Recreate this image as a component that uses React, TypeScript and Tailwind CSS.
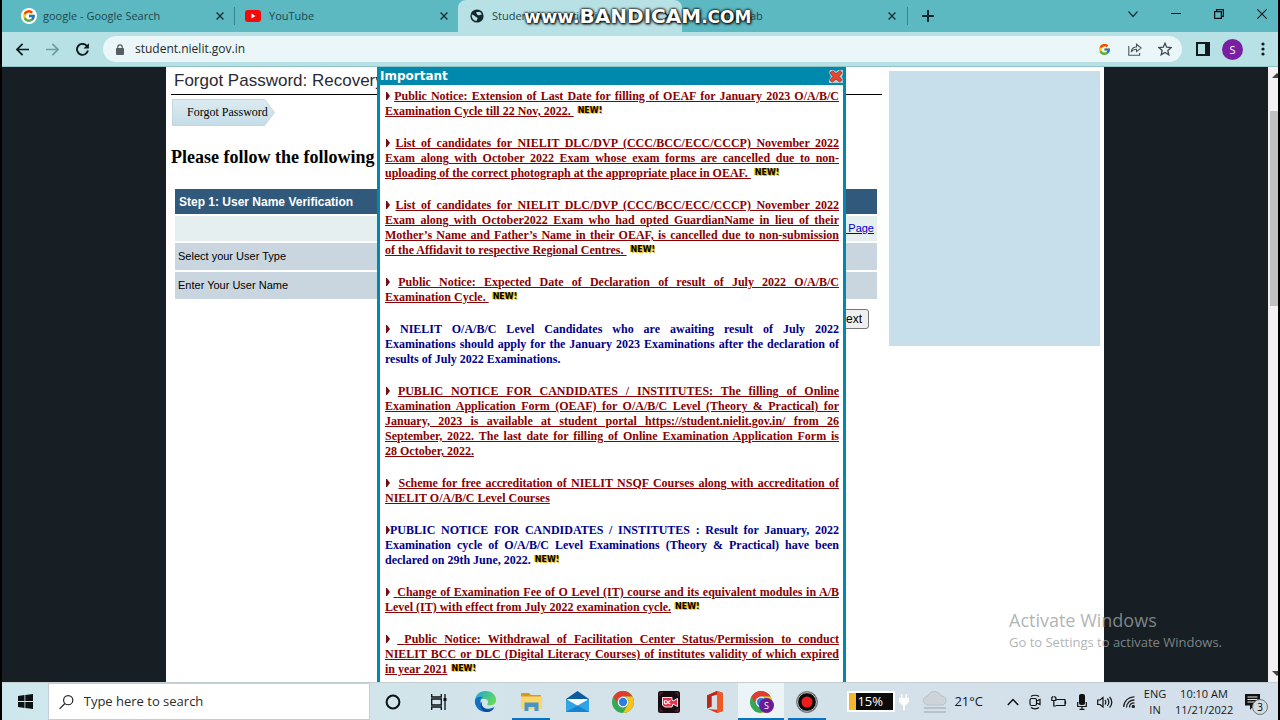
import React from 'react';
import { FcGoogle } from 'react-icons/fc';

interface Notice {
  lead: 'none' | 'space' | 'double' | 'link';
  lines: string[];
  plain?: boolean;
  isNew?: boolean;
}

const NOTICES: Notice[] = [
  {
    lead: 'space',
    isNew: true,
    lines: ['Public Notice: Extension of Last Date for filling of OEAF for January 2023 O/A/B/C', 'Examination Cycle till 22 Nov, 2022.\u00a0'],
  },
  {
    lead: 'space',
    isNew: true,
    lines: [
      'List of candidates for NIELIT DLC/DVP (CCC/BCC/ECC/CCCP) November 2022',
      'Exam along with October 2022 Exam whose exam forms are cancelled due to non-',
      'uploading of the correct photograph at the appropriate place in OEAF.\u00a0',
    ],
  },
  {
    lead: 'space',
    isNew: true,
    lines: [
      'List of candidates for NIELIT DLC/DVP (CCC/BCC/ECC/CCCP) November 2022',
      'Exam along with October2022 Exam who had opted GuardianName in lieu of their',
      'Mother’s Name and Father’s Name in their OEAF, is cancelled due to non-submission',
      'of the Affidavit to respective Regional Centres.\u00a0',
    ],
  },
  {
    lead: 'space',
    isNew: true,
    lines: ['Public Notice: Expected Date of Declaration of result of July 2022 O/A/B/C', 'Examination Cycle.\u00a0'],
  },
  {
    lead: 'space',
    plain: true,
    lines: [
      'NIELIT O/A/B/C Level Candidates who are awaiting result of July 2022',
      'Examinations should apply for the January 2023 Examinations after the declaration of',
      'results of July 2022 Examinations.',
    ],
  },
  {
    lead: 'space',
    lines: [
      'PUBLIC NOTICE FOR CANDIDATES / INSTITUTES: The filling of Online',
      'Examination Application Form (OEAF) for O/A/B/C Level (Theory & Practical) for',
      'January, 2023 is available at student portal https://student.nielit.gov.in/ from 26',
      'September, 2022. The last date for filling of Online Examination Application Form is',
      '28 October, 2022.',
    ],
  },
  {
    lead: 'double',
    lines: ['Scheme for free accreditation of NIELIT NSQF Courses along with accreditation of', 'NIELIT O/A/B/C Level Courses'],
  },
  {
    lead: 'none',
    plain: true,
    isNew: true,
    lines: [
      'PUBLIC NOTICE FOR CANDIDATES / INSTITUTES : Result for January, 2022',
      'Examination cycle of O/A/B/C Level Examinations (Theory & Practical) have been',
      'declared on 29th June, 2022.',
    ],
  },
  {
    lead: 'link',
    isNew: true,
    lines: ['Change of Examination Fee of O Level (IT) course and its equivalent modules in A/B', 'Level (IT) with effect from July 2022 examination cycle.'],
  },
  {
    lead: 'link',
    isNew: true,
    lines: [
      'Public Notice: Withdrawal of Facilitation Center Status/Permission to conduct',
      'NIELIT BCC or DLC (Digital Literacy Courses) of institutes validity of which expired',
      'in year 2021',
    ],
  },
];

const LEADS = {
  none: '',
  space: ' ',
  double: '\u00a0 ',
  link: ' ',
};

const Bullet = () => (
  <svg className="inline-block h-2 w-[5px] align-baseline" viewBox="0 0 5 8" fill="#6d0f14">
    <path d="M1 0h1l3 4-3 4H1z" />
  </svg>
);

const NewBadge = () => (
  <span className="ml-1 inline-block pb-1 align-middle font-['DejaVu_Sans',sans-serif] text-[8px] leading-[9px] font-bold text-black [text-shadow:1px_1px_0_#f2b705,-1px_0_0_#f2b705]">
    NEW!
  </span>
);

const NoticeItem: React.FC<{ notice: Notice }> = ({ notice }) => {
  const last = notice.lines.length - 1;
  const body = notice.lines.map((line, i) => (
    <span key={line} className={`block h-[15px] whitespace-nowrap ${i === last ? 'text-left' : 'text-justify [text-align-last:justify]'}`}>
      {i === 0 && (
        <>
          <Bullet />
          {LEADS[notice.lead]}
        </>
      )}
      <span className={notice.plain ? '' : 'underline'}>
        {i === 0 && notice.lead === 'link' && '\u00a0'}
        {line}
      </span>
      {i === last && notice.isNew && <NewBadge />}
    </span>
  ));

  return (
    <li className={notice.plain ? 'text-[#00008b]' : 'text-[#8b0000]'}>
      {notice.plain ? <p>{body}</p> : <a href="#notice" className="block">{body}</a>}
    </li>
  );
};

const CloseX = ({ className }: { className?: string }) => (
  <svg className={className} viewBox="0 0 8 8" fill="none" stroke="#17333a" strokeWidth="1.4">
    <path d="M.6.6l6.8 6.8M7.4.6L.6 7.4" />
  </svg>
);

const TabBar = () => (
  <div className="flex h-8 shrink-0 bg-[#5cb8c1] text-[11px] text-[#20474e]">
    <div className="flex w-[233px] items-center pl-[19px]">
      <span className="grid size-4 place-items-center rounded-full bg-white">
        <FcGoogle size={14} />
      </span>
      <span className="ml-1.5 flex-1 truncate">google - Google Search</span>
      <button type="button" aria-label="Close tab" className="mr-2.5"><CloseX className="size-2" /></button>
      <span className="h-[18px] w-px bg-[#35858e]" />
    </div>
    <div className="flex w-[223px] items-center pr-2.5 pl-2.5">
      <svg className="h-3 w-4" viewBox="0 0 16 12">
        <rect width="16" height="12" rx="3" fill="#f00a0a" />
        <path d="M6.5 3.5v5l4-2.5z" fill="#fff" />
      </svg>
      <span className="ml-2 flex-1 truncate">YouTube</span>
      <button type="button" aria-label="Close tab"><CloseX className="size-2" /></button>
    </div>
    <div className="flex w-[224px] items-center rounded-t-lg bg-[#b7e1e4] pr-2.5 pl-3">
      <svg className="size-3.5" viewBox="0 0 14 14">
        <circle cx="7" cy="7" r="6.6" fill="#14282d" />
        <path d="M1.8 5.5c1.4.4 2.5.8 3.3 1.8.5.8 2 .8 2.4 1.6.2.9-.6 1.5-.8 2.9-2.6.2-5.2-2.1-4.9-6.3zM6.2 3.6c.8-.9 1.9-.3 3-.8.9.4 2 1 2.6 2.4-.8.9-1.9.2-2.5 1-.8.3-1.9 0-2.200-.9-.2-.7-1-.9-.9-1.700z" fill="#b7e1e4" />
      </svg>
      <span className="ml-2 flex-1 truncate">Student Authentication</span>
      <button type="button" aria-label="Close tab"><CloseX className="size-2" /></button>
    </div>
    <div className="flex w-[225px] items-center pr-[11px] pl-9">
      <span className="flex-1 truncate">New Tab</span>
      <button type="button" aria-label="Close tab"><CloseX className="size-2" /></button>
    </div>
    <div className="flex flex-1 items-center">
      <span className="h-[18px] w-px bg-[#35858e]" />
      <button type="button" aria-label="New tab" className="ml-3.5">
        <svg className="size-3" viewBox="0 0 12 12" stroke="#10292e" strokeWidth="2"><path d="M6 0v12M0 6h12" /></svg>
      </button>
    </div>
    <div className="flex items-start gap-[33px] pt-2 pr-[11px]">
      <button type="button" aria-label="Search tabs">
        <svg className="h-3 w-2.5" viewBox="0 0 10 12" fill="none" stroke="#17333a" strokeWidth="1.2"><path d="M.5 3.5L5 8.5l4.5-5" /></svg>
      </button>
      <button type="button" aria-label="Minimize">
        <svg className="h-3 w-2.5" viewBox="0 0 10 12" stroke="#111"><path d="M0 5.500h10" /></svg>
      </button>
      <button type="button" aria-label="Restore">
        <svg className="h-3 w-2.5" viewBox="0 0 10 12" fill="none" stroke="#111" strokeWidth="1.3"><path d="M.6 3.600h6.800v6.800H.6zM2.600 3.500V1.600h6.800v6.800H7.500" /></svg>
      </button>
      <button type="button" aria-label="Close window">
        <svg className="h-3 w-2.5" viewBox="0 0 10 12" stroke="#111" strokeWidth="1.2"><path d="M.3 1.300l9.400 9.400M9.700 1.300L.3 10.700" /></svg>
      </button>
    </div>
  </div>
);

const Toolbar = () => (
  <div className="flex h-[35px] shrink-0 items-center border-b border-[#8fc3c8] bg-[#b7e1e4] pr-[13px] pl-3.5">
    <div className="flex gap-[17px]">
      <button type="button" aria-label="Back">
        <svg className="size-[13px]" viewBox="0 0 13 13" fill="none" stroke="#10191c" strokeWidth="1.7"><path d="M13 6.500H1.200M6.600.8L1 6.500l5.600 5.700" /></svg>
      </button>
      <button type="button" aria-label="Forward">
        <svg className="size-[13px]" viewBox="0 0 13 13" fill="none" stroke="#6b9da1" strokeWidth="1.7"><path d="M0 6.500h11.800M6.400.8L12 6.500l-5.600 5.700" /></svg>
      </button>
      <button type="button" aria-label="Reload">
        <svg className="size-[13px]" viewBox="0 0 13 13" fill="none" stroke="#10191c" strokeWidth="1.9"><path d="M11.900 7.500A5.500 5.500 0 1 1 10.600 2.700L12 4.200" /><path d="M12.900.2v5.400H7.500z" fill="#10191c" stroke="none" /></svg>
      </button>
    </div>
    <div className="ml-3.5 flex h-[26px] flex-1 items-center rounded-full bg-[#eaf6f7] pr-2.5 pl-[13px]">
      <svg className="h-[11px] w-2" viewBox="0 0 8 11"><rect y="4" width="8" height="7" rx="1" fill="#555e61" /><path d="M1.800 4.500V3a2.200 2.200 0 0 1 4.400 0v1.500" fill="none" stroke="#555e61" strokeWidth="1.2" /></svg>
      <input aria-label="Address" defaultValue="student.nielit.gov.in" className="ml-[11px] flex-1 bg-transparent text-xs text-[#1d2a2d] outline-none" />
      <FcGoogle size={13} />
      <svg className="ml-[17px] h-3.5 w-3.5" viewBox="0 0 14 14" fill="none" stroke="#4a5558" strokeWidth="1.1">
        <path d="M.8 4v9.300h10.800V11M3.200 10c.4-3.300 2.500-5 5.300-5V2.200L13.200 6 8.500 9.700V7.300C6.200 7.300 4.600 8 3.200 10z" />
      </svg>
      <svg className="ml-4 size-3.5" viewBox="0 0 14 14" fill="none" stroke="#3f4a4d" strokeWidth="1.3">
        <path d="M7 1.200l1.700 4 4.400.4-3.300 2.900 1 4.300L7 10.500l-3.800 2.300 1-4.300L.9 5.600l4.400-.4z" />
      </svg>
    </div>
    <svg className="ml-3.5 h-3.5 w-3.5" viewBox="0 0 14 14"><rect x="1" y="1" width="12" height="12" fill="none" stroke="#10191c" strokeWidth="2" /><path d="M9 1h4v12H9z" fill="#10191c" /></svg>
    <button type="button" className="ml-3 size-[21px] rounded-full bg-[#7b1fa2] text-[11px] leading-[21px] text-white">S</button>
    <button type="button" aria-label="Menu" className="ml-[18px]">
      <svg className="h-3.5 w-1" viewBox="0 0 4 14" fill="#10191c"><circle cx="2" cy="2" r="1.6" /><circle cx="2" cy="7" r="1.6" /><circle cx="2" cy="12" r="1.6" /></svg>
    </button>
  </div>
);

const ForgotPassword = () => (
  <div className="w-[717px] pl-[5px] font-['Liberation_Sans',sans-serif]">
    <div className="mr-px border-b border-black pt-0.5 pb-px pl-[3px]">
      <h1 className="text-[17px] leading-6 text-[#2a2a35]">Forgot Password: Recovery</h1>
    </div>
    <div className="relative mt-1 ml-px h-[27px] w-[103px]">
      <svg className="absolute inset-0 size-full" viewBox="0 0 103 27">
        <defs>
          <linearGradient id="chip" x1="0" y1="0" x2="0" y2="1">
            <stop offset="0" stopColor="#dcebf1" />
            <stop offset="1" stopColor="#c5dde7" />
          </linearGradient>
        </defs>
        <path d="M.5.5h92l10 13-10 13H.5z" fill="url(#chip)" stroke="#c3d5dd" />
      </svg>
      <p className="relative pl-[15px] font-['Liberation_Serif',serif] text-xs leading-[26px] text-black">Forgot Password</p>
    </div>
    <h2 className="mt-[21px] font-['Liberation_Serif',serif] text-lg leading-5 font-bold text-black">Please follow the following steps</h2>
    <table className="mt-5 ml-0.5 w-[706px] border-separate border-spacing-x-[2px] border-spacing-y-[2px] text-[11px] text-black">
      <tbody>
        <tr className="h-[25px] bg-[#31597c] text-white">
          <th colSpan={2} className="pl-1 text-left text-xs font-bold">Step 1: User Name Verification</th>
        </tr>
        <tr className="h-[25px] bg-[#e6efef]">
          <td colSpan={2} className="pr-[3px] text-right text-[#0000c8]"><a href="#login" className="underline">Login Page</a></td>
        </tr>
        <tr className="h-[27px] bg-[#c9d6df]"><td colSpan={2} className="pl-[3px]">Select your User Type</td></tr>
        <tr className="h-[27px] bg-[#c9d6df]"><td colSpan={2} className="pl-[3px]">Enter Your User Name</td></tr>
      </tbody>
    </table>
    <div className="mt-2 flex justify-end pr-[14px]">
      <button type="button" className="h-5 rounded-[3px] border border-[#767676] bg-[#efefef] px-1.5 text-xs leading-[18px] text-black">Next</button>
    </div>
  </div>
);

const ImportantDialog = () => (
  <section className="absolute top-0 bottom-0 left-[375px] w-[469px] overflow-hidden border-x-[3px] border-[#0089ad] bg-white">
    <header className="flex h-[18px] items-center justify-between bg-[#0089ad]">
      <h2 className="font-['DejaVu_Sans',sans-serif] text-xs font-bold text-white">Important</h2>
      <button type="button" aria-label="Close">
        <svg className="h-[13px] w-[14px]" viewBox="0 0 15 14">
          <path d="M1 0h4l2.500 2L10 0h5v4l-1 3 1 3v4H0v-3l2-4-2-4z" fill="#a9cfdb" />
          <path d="M1 3l3-2 3.500 3L12 .8l2 2.400-3.300 3.600L14 10.500 11.500 13 7.500 9.800 3.500 13 1 10.800l3.200-3.900z" fill="#e8472d" stroke="#a62517" strokeWidth=".8" />
        </svg>
      </button>
    </header>
    <ul className="flex flex-col gap-[17px] pt-1 pr-1 pl-[5px] font-['Liberation_Serif',serif] text-xs leading-[15px] font-bold">
      {NOTICES.map((notice, i) => (
        <NoticeItem key={i} notice={notice} />
      ))}
    </ul>
  </section>
);

const ChromeIcon = () => (
  <svg className="size-[22px]" viewBox="0 0 22 22">
    <circle cx="11" cy="11" r="11" fill="#34a853" />
    <path d="M1.500 5.500A11 11 0 0 1 20.500 5.500H11L6.200 13.700z" fill="#e33b2e" />
    <path d="M20.500 5.500A11 11 0 0 1 11 22l4.800-8.300A5.500 5.500 0 0 0 11 5.500z" fill="#fbc116" />
    <circle cx="11" cy="11" r="5.4" fill="#fff" />
    <circle cx="11" cy="11" r="4.2" fill="#2f7de1" />
  </svg>
);

const TASKS: { name: string; icon: React.ReactNode; state?: 'open' | 'active' }[] = [
  {
    name: 'Cortana',
    icon: <svg className="size-4" viewBox="0 0 16 16"><circle cx="8" cy="8" r="6.4" fill="none" stroke="#0d1113" strokeWidth="2" /></svg>,
  },
  {
    name: 'Task View',
    icon: (
      <svg className="size-4" viewBox="0 0 16 16" fill="none" stroke="#0d1113" strokeWidth="1.3">
        <path d="M.7 0v3h9.600V0M.7 16v-3h9.600v3M.7 5h9.600v6H.7zM14 0v16" /><path d="M12.500 4h3v3h-3z" fill="#0d1113" stroke="none" />
      </svg>
    ),
  },
  {
    name: 'Edge',
    icon: (
      <svg className="size-[23px]" viewBox="0 0 24 24">
        <defs>
          <linearGradient id="edgeTop" x1="0" y1="0" x2="1" y2="0.5"><stop offset="0" stopColor="#1fa2e0" /><stop offset="1" stopColor="#63d95a" /></linearGradient>
        </defs>
        <path d="M1 12C1 5 6 1 12 1c7 0 11.500 5 11 10-.4 4-4 5.500-8 5-1.500-.2-1.500-1-.8-2 1.500-2-.2-5-3.700-5C6 9 3 12 2.500 17A11 11 0 0 1 1 12z" fill="url(#edgeTop)" />
        <path d="M1 11c.7-3 4.500-5 8-3.500C5 9 6.500 19 14 19.500c3 .2 5.500-.8 7.500-2.300C19.500 21 16 23.500 11.500 23 5 22.500.5 17 1 11z" fill="#1570c4" />
        <path d="M8.500 12c-1.500 5 2 8.500 7 8.500 2.500 0 4.500-1 6-2.500-1.500 3-4.500 5-8 5-6 0-8.500-7.500-5-11z" fill="#0b4d95" />
      </svg>
    ),
  },
  {
    name: 'File Explorer',
    state: 'open',
    icon: (
      <svg className="h-[19px] w-[21px]" viewBox="0 0 21 19">
        <path d="M0 1h8l2 2h10v5H0z" fill="#d39b26" /><path d="M0 4.500h21V17H0z" fill="#f9d76b" />
        <path d="M3.500 10.500h14V19h-4v-4h-6v4h-4z" fill="#4796c9" />
      </svg>
    ),
  },
  {
    name: 'Mail',
    icon: (
      <svg className="h-[21px] w-[23px]" viewBox="0 0 23 21">
        <path d="M0 8l11.500-8L23 8v5H0z" fill="#0c5ba0" /><path d="M1.500 8h20v6l-10 4-10-4z" fill="#f7fbff" />
        <path d="M0 8l11.500 6.500L23 8v13H0z" fill="#31a4e6" /><path d="M1.500 8h20l-10 6.500z" fill="#f7fbff" /><path d="M0 21l11.500-6.500L23 21z" fill="#1683d2" />
      </svg>
    ),
  },
  { name: 'Chrome', icon: <ChromeIcon /> },
  {
    name: 'Screen recorder',
    icon: (
      <svg className="size-[22px]" viewBox="0 0 22 22">
        <rect width="22" height="22" rx="2.5" fill="#170c10" />
        <path d="M2 5V2h3M17 2h3v3M2 17v3h3M17 20h3v-3" fill="none" stroke="#8e2c3c" strokeWidth=".8" />
        <path d="M4.500 6.500h9.500v2.500l1 1 4.500-2.500v8L15 13l-1 3H6.500l-2-2z" fill="#e6304a" stroke="#fff" strokeWidth=".9" />
        <path d="M12.500 9.500c-2 0-3 3.500-4.700 3.500-2 0-2-3.500 0-3.500 1.700 0 2.700 3.500 4.700 3.500" fill="none" stroke="#fff" strokeWidth="1.2" />
      </svg>
    ),
  },
  {
    name: 'Office',
    icon: (
      <svg className="h-[22px] w-[18px]" viewBox="0 0 18 22">
        <path d="M11 0l6 2v18l-6 2-9-4 9 .8V3.500L5.500 5v10.500L1 17.500v-13z" fill="#d83b1c" /><path d="M11 0l6 2v18l-6 2z" fill="#ee5a24" /><path d="M1 4.500L11 0v3.500L5.500 5v10.500L1 17.500z" fill="#b92818" />
      </svg>
    ),
  },
  {
    name: 'Chrome, profile S',
    state: 'active',
    icon: (
      <>
        <ChromeIcon />
        <span className="absolute top-[15px] left-[21px] size-[15px] rounded-full bg-[#6a1b9a] text-center text-[9px] leading-[15px] text-white">S</span>
      </>
    ),
  },
  {
    name: 'Bandicam',
    state: 'open',
    icon: (
      <svg className="size-[22px]" viewBox="0 0 22 22">
        <circle cx="11" cy="11" r="10.5" fill="#0c0c0c" stroke="#7d878c" /><circle cx="11" cy="11" r="9.4" fill="none" stroke="#fff" strokeWidth=".8" /><circle cx="11" cy="11" r="5.5" fill="#ef1c1c" />
      </svg>
    ),
  },
];

const Tray = () => (
  <div className="flex flex-1 items-center justify-end pr-[9px] text-[11px] text-[#14191c]">
    <div className="flex h-[17px] w-11 items-center bg-[linear-gradient(90deg,#f5b52c_7px,#0b0b0b_7px)] pl-2 text-[13px] text-white outline-2 outline-white">15%</div>
    <svg className="ml-[5px] h-4 w-3" viewBox="0 0 12 16" fill="#fff"><path d="M3 0h1.500v4h3V0H9v4h2v4L8 11H7v5H5v-5H4L1 8V4h2z" /></svg>
    <svg className="ml-[13px] h-6 w-6" viewBox="0 0 24 24">
      <path d="M5 15a4.500 4.500 0 0 1 0-9A7 7 0 0 1 18 6a4.500 4.500 0 0 1 1 9z" fill="#cdd3d8" stroke="#b9c1c7" /><path d="M1 18h22M1 22h22" stroke="#aeb8bf" strokeWidth="1.5" />
    </svg>
    <span className="ml-[7px] text-[13px]">21°C</span>
    <div className="ml-6 flex items-center gap-2.5">
      <svg className="h-2 w-3" viewBox="0 0 12 8" fill="none" stroke="#111" strokeWidth="1.5"><path d="M.8 7L6 1.500 11.200 7" /></svg>
      <svg className="h-4 w-3" viewBox="0 0 12 16" fill="none" stroke="#111" strokeWidth="1.2"><rect x="1" y="4.500" width="6.500" height="7" rx="1.500" /><path d="M7.500 7l3.500-1.500v5L7.500 9M2 2.500C4 .8 8 .8 10 2.500M2 13.500c2 1.700 6 1.700 8 0" /></svg>
      <svg className="h-3 w-4" viewBox="0 0 16 12" fill="none" stroke="#111" strokeWidth="1.2"><path d="M5 3.500h9v6H5M14.500 5v3M.8 1v3.500h4V1M1.800 0v1.500M3.800 0v1.500M2.800 4.500V10H5" /></svg>
      <svg className="h-4 w-2.5" viewBox="0 0 10 16"><rect x="2" width="6" height="11" rx="2" fill="#111" /><path d="M.7 8v4.500h8.600V8M5 13v2.500M2.500 15.400h5" fill="none" stroke="#111" strokeWidth="1.2" /></svg>
      <svg className="h-3.5 w-4" viewBox="0 0 16 14" fill="none" stroke="#111" strokeWidth="1.2"><path d="M.7 5v4.500H3L6 12V2.500L3 5zM8 5c1 1.300 1 3 0 4.500M10.300 3.500c2 2.300 2 5 0 7.500M12.600 2c2.800 3.300 2.800 7.200 0 10.500" /></svg>
      <svg className="size-3" viewBox="0 0 12 12" fill="none" stroke="#222" strokeWidth="1.3"><path d="M.7 11A10.300 10.300 0 0 1 11.500.8M3.500 11.500a7.600 7.600 0 0 1 8-7.500M6.500 11.500c0-3 2-4.600 5-4.600" /><circle cx="10.300" cy="10.500" r="1" fill="#222" /></svg>
    </div>
    <div className="ml-2 w-6 text-center leading-4">ENG<br />IN</div>
    <div className="ml-2 w-[58px] text-center leading-4 whitespace-nowrap">
      <div>10:10 AM</div>
      <div>11/21/2022</div>
    </div>
    <button type="button" aria-label="Notifications" className="relative ml-3 h-6 w-6">
      <svg className="absolute top-1 left-0 h-4 w-[15px]" viewBox="0 0 15 16"><path d="M0 0h15v11.500H9L5 16v-4.500H0z" fill="#111" /><path d="M2.500 3h10M2.500 5.500h10M2.500 8h7" stroke="#fff" strokeWidth=".9" /></svg>
      <span className="absolute top-[9px] left-[7px] size-4 rounded-full border border-[#6d767b] bg-[#d3dbe0] text-center text-[10px] leading-[14px] text-black">3</span>
    </button>
  </div>
);

const Taskbar = () => (
  <footer className="flex h-[37px] shrink-0 bg-linear-to-r from-[#cde8ed] via-[#d4e2e9] to-[#d3dfeb]">
    <button type="button" aria-label="Start" className="grid w-[46px] place-items-center">
      <svg className="size-[15px]" viewBox="0 0 15 15" fill="#0c1113"><path d="M0 2l6.500-1v6H0zM7.300.9L15 0v7H7.300zM0 7.900h6.500v6L0 13zM7.300 7.900H15V15l-7.700-1z" /></svg>
    </button>
    <label className="flex w-[322px] items-center border border-[#c5cfd2] bg-white pl-2.5">
      <svg className="size-4" viewBox="0 0 16 16" fill="none" stroke="#222" strokeWidth="1.3"><circle cx="10" cy="6" r="5" /><path d="M6.400 9.600L.6 15.500" /></svg>
      <input aria-label="Search" placeholder="Type here to search" className="ml-2.5 w-full bg-transparent text-[13px] outline-none placeholder:text-[#2c2c2c]" />
    </label>
    <nav className="flex">
      {TASKS.map((task) => (
        <button
          key={task.name}
          type="button"
          aria-label={task.name}
          className={`relative grid w-[46px] place-items-center ${task.state === 'active' ? 'bg-[#edf4f8]' : ''}`}
        >
          {task.icon}
          {task.state && <span className={`absolute bottom-0 h-0.5 bg-[#0b71c1] ${task.state === 'active' ? 'inset-x-0' : 'inset-x-1'}`} />}
        </button>
      ))}
    </nav>
    <Tray />
  </footer>
);

const App: React.FC = () => {
  return (
    <div className="relative flex h-screen flex-col overflow-hidden bg-black px-0.5 font-['Open_Sans',sans-serif]">
      <TabBar />
      <Toolbar />
      <main className="relative flex min-h-0 flex-1 border-b border-[#c5cfd2] bg-[#171f24]">
        <div className="flex flex-1 justify-center">
          <div className="flex w-[938px] items-start gap-[6px] bg-white">
            <ForgotPassword />
            <aside className="mt-1 h-[275px] w-[211px] bg-[#c7deeb]" />
          </div>
        </div>
        <div className="flex w-2.5 flex-col items-end bg-[#f1f1f1]">
          <svg className="mt-1.5 h-1.5 w-1.5" viewBox="0 0 6 6" fill="#444"><path d="M0 5l5-5 1 1v4z" /></svg>
          <div className="mt-8 h-[195px] w-2 bg-[#c1c1c1]" />
          <svg className="mt-auto mb-1.5 h-1.5 w-1.5" viewBox="0 0 6 6" fill="#444"><path d="M0 1l5 5 1-1V1z" /></svg>
        </div>
        <ImportantDialog />
      </main>
      <Taskbar />
      <div className="pointer-events-none absolute top-[608px] left-[1009px] whitespace-nowrap text-[#9a9fa2]/80">
        <p className="text-lg leading-6">Activate Windows</p>
        <p className="text-[13px] leading-5">Go to Settings to activate Windows.</p>
      </div>
      <div className="pointer-events-none absolute top-1 left-[524px] flex items-baseline font-['DejaVu_Sans',sans-serif] text-xl leading-6 font-bold whitespace-nowrap text-white [text-shadow:0_0_2px_#000,0_0_3px_#000,1px_1px_3px_#000]">
        <span className="text-lg leading-6">www.</span>
        <span>BANDICAM</span>
        <span className="text-[17px]">.COM</span>
      </div>
    </div>
  );
};

export default App;
